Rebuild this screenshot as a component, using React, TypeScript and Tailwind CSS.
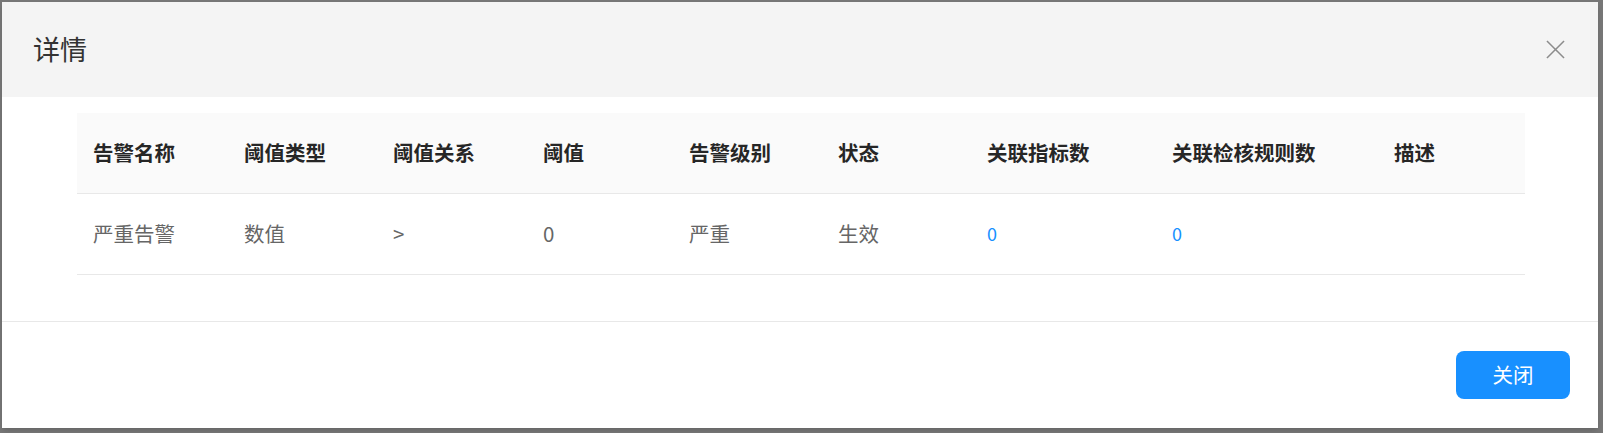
const columns = [
  { title: "告警名称", width: 151 },
  { title: "阈值类型", width: 149 },
  { title: "阈值关系", width: 150 },
  { title: "阈值", width: 146 },
  { title: "告警级别", width: 149 },
  { title: "状态", width: 149 },
  { title: "关联指标数", width: 185 },
  { title: "关联检核规则数", width: 222 },
  { title: "描述", width: 147 },
];

const row = ["严重告警", "数值", ">", "0", "严重", "生效"];

function CloseIcon() {
  return (
    <svg
      viewBox="0 0 20 20"
      className="h-[19px] w-[19px]"
      fill="none"
      stroke="currentColor"
      strokeWidth="1.6"
    >
      <path d="M1 1 19 19" />
      <path d="M19 1 1 19" />
    </svg>
  );
}

export default function App() {
  return (
    <div
      className="h-[433px] w-[1603px] overflow-hidden bg-[#777777] p-[2px] pr-[5px]"
      style={{ fontFamily: '"Noto Sans CJK SC", "Noto Sans", sans-serif' }}
    >
      <div className="flex h-[426px] w-[1596px] flex-col bg-white shadow-md">
        <div className="flex h-[95px] shrink-0 items-center justify-between bg-[#f4f4f4] pl-[31px] pr-[33px]">
          <h3 className="text-[27px] font-normal text-[#333333]">详情</h3>
          <button type="button" className="text-[#8c8c8c]">
            <CloseIcon />
          </button>
        </div>

        <div className="px-[75px] pt-[16px] pb-[46px]">
          <table className="w-[1448px] table-fixed border-collapse">
            <colgroup>
              {columns.map((col) => (
                <col key={col.title} style={{ width: col.width }} />
              ))}
            </colgroup>
            <thead>
              <tr className="h-[80px] border-b border-[#e8e8e8] bg-[#fafafa]">
                {columns.map((col) => (
                  <th
                    key={col.title}
                    className="px-[16px] text-left text-[20.5px] font-bold text-[#262626]"
                  >
                    {col.title}
                  </th>
                ))}
              </tr>
            </thead>
            <tbody>
              <tr className="h-[81px] border-b border-[#e8e8e8]">
                {row.map((cell, i) => (
                  <td
                    key={i}
                    className="px-[16px] text-[20.5px] text-[#666666]"
                  >
                    {cell}
                  </td>
                ))}
                <td className="px-[16px] text-[18px] text-[#1890ff]">0</td>
                <td className="px-[16px] text-[18px] text-[#1890ff]">0</td>
                <td className="px-[16px]"></td>
              </tr>
            </tbody>
          </table>
        </div>

        <div className="flex flex-1 items-center justify-end border-t border-[#e8e8e8] pr-[28px]">
          <button
            type="button"
            className="h-[48px] w-[114px] rounded-[8px] bg-[#1890ff] text-[20.5px] text-white"
          >
            关闭
          </button>
        </div>
      </div>
    </div>
  );
}
